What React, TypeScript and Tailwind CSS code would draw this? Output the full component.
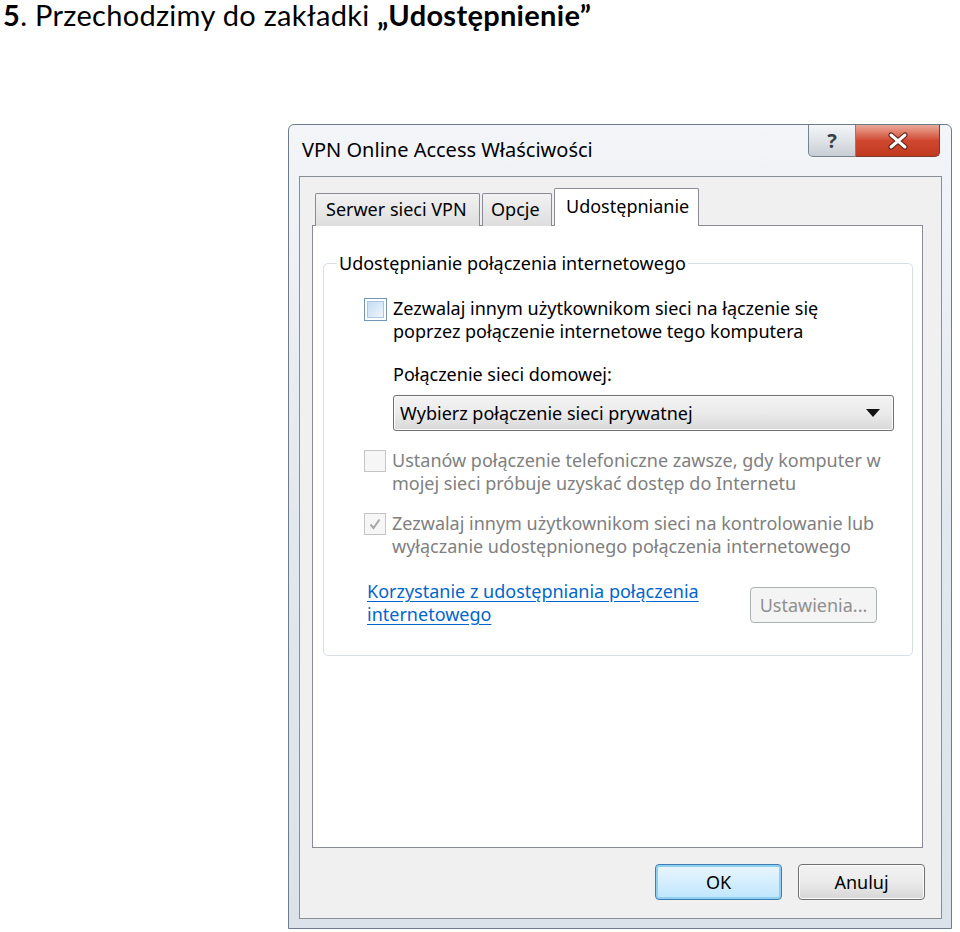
import React from "react";

const ui = { fontFamily: '"Noto Sans", "Open Sans", sans-serif' };

function Checkbox({ state }: { state: "focus" | "off" | "checked" }) {
    if (state === "focus") {
        return (
            <div className="w-[23px] h-[23px] border border-[#7196b8] bg-white p-[2px] shrink-0">
                <div className="w-full h-full border border-[#a9c7e2] bg-gradient-to-br from-[#c4dcf2] to-[#eef6fd]"></div>
            </div>
        );
    }
    return (
        <div className="w-[22px] h-[22px] border border-[#c4c4c4] bg-[#f6f6f6] shrink-0 flex items-center justify-center">
            {state === "checked" ?
                <svg width="14" height="14" viewBox="0 0 14 14">
                    <path d="M2.5 7.5 L5.5 11 L11.5 2.5" fill="none" stroke="#a8a8a8" strokeWidth="2" />
                </svg> : <></>}
        </div>
    );
}

function WinButton({ label, primary, disabled }: { label: string, primary?: boolean, disabled?: boolean }) {
    const cls = primary
        ? "border-[#3c7fb1] bg-gradient-to-b from-[#eaf6fd] to-[#bee6fd] shadow-[inset_0_0_0_2px_#8fd0f2]"
        : disabled
            ? "border-[#adb2b5] bg-[#f4f4f4] text-[#8f8f8f]"
            : "border-[#707070] bg-gradient-to-b from-[#f2f2f2] via-[#ebebeb] to-[#d6d6d6] shadow-[inset_0_0_0_1px_#fcfcfc]";
    return (
        <div className={"w-[127px] h-[36px] rounded-[4px] border flex items-center justify-center text-[18px] " + cls}>
            {label}
        </div>
    );
}

export default function App() {
    return (
        <div className="w-[960px] h-[932px] bg-white overflow-hidden">
            {/* instruction heading above the screenshot */}
            <div className="pl-[3px] h-[30px] text-[29px] leading-[30px] tracking-[0.3px] text-black whitespace-nowrap" style={{ fontFamily: 'Lato, "Liberation Sans", sans-serif' }}>
                <span className="font-bold">5</span>. Przechodzimy do zakładki <span className="font-bold">„Udostępnienie”</span>
            </div>

            {/* dialog window */}
            <div className="ml-[288px] mt-[94px] w-[664px] h-[805px] border border-[#6d7b8a] rounded-t-[6px] bg-gradient-to-b from-[#f3f5f8] via-[#e2e8ef] to-[#dbe2ea] flex flex-col" style={ui}>
                <div className="h-[51px] flex items-start">
                    <div className="pl-[13px] pt-[11px] text-[20px] text-black leading-[28px]">VPN Online Access Właściwości</div>
                    <div className="ml-auto mr-[11px] flex">
                        <div className="w-[48px] h-[32px] border border-[#76828f] border-t-0 rounded-bl-[5px] bg-gradient-to-b from-[#f4f6f8] via-[#dfe3e7] to-[#c8ced5] flex items-center justify-center text-[20px] font-bold text-[#3a3f45]">?</div>
                        <div className="w-[84px] h-[32px] border border-[#7a3a2f] border-t-0 border-l-0 rounded-br-[5px] bg-gradient-to-b from-[#e9a99a] via-[#d0472f] to-[#c1391f] flex items-center justify-center">
                            <svg width="22" height="18" viewBox="0 0 22 18">
                                <path d="M4 3 L18 15 M18 3 L4 15" stroke="#5b1e12" strokeWidth="5" strokeLinecap="round" />
                                <path d="M4 3 L18 15 M18 3 L4 15" stroke="#ffffff" strokeWidth="3" strokeLinecap="round" />
                            </svg>
                        </div>
                    </div>
                </div>

                {/* client area */}
                <div className="ml-[10px] w-[643px] h-[743px] border border-[#8a8f96] bg-[#f0f0f0] flex flex-col">
                    <div className="ml-[12px] mt-[11px] w-[611px]">
                        {/* tabs */}
                        <div className="flex items-end gap-[2px] pl-[3px] h-[38px] relative z-10 -mb-px">
                            <div className="w-[165px] h-[33px] border border-[#898c95] border-b-0 rounded-t-[2px] bg-gradient-to-b from-[#f2f2f2] to-[#dedede] text-[18px] leading-[31px] pl-[10px] text-black whitespace-nowrap">Serwer sieci VPN</div>
                            <div className="w-[70px] h-[33px] border border-[#898c95] border-b-0 rounded-t-[2px] bg-gradient-to-b from-[#f2f2f2] to-[#dedede] text-[18px] leading-[31px] pl-[8px] text-black">Opcje</div>
                            <div className="w-[145px] h-[38px] border border-[#898c95] border-b-0 rounded-t-[2px] bg-white text-[18px] leading-[34px] pl-[11px] text-black">Udostępnianie</div>
                        </div>

                        {/* tab panel */}
                        <div className="h-[623px] border border-[#898c95] bg-white pl-[10px] pt-[37px]">
                            <div className="w-[590px] h-[393px] border border-[#d5dfe5] rounded-[5px] pl-[40px] pr-[16px] relative">
                                <div className="absolute left-[13px] -top-[15px] bg-white px-[2px] text-[18px] leading-[28px] text-black whitespace-nowrap">Udostępnianie połączenia internetowego</div>

                                <div className="flex gap-[6px] mt-[34px]">
                                    <Checkbox state="focus" />
                                    <div className="text-[18px] leading-[23px] text-black -mt-[1px] whitespace-nowrap">
                                        Zezwalaj innym użytkownikom sieci na łączenie się<br />poprzez połączenie internetowe tego komputera
                                    </div>
                                </div>

                                <div className="ml-[29px] mt-[20px] text-[18px] leading-[23px] text-black">Połączenie sieci domowej:</div>

                                <div className="ml-[29px] mt-[9px] w-[501px] h-[36px] rounded-[3px] border border-[#707070] bg-gradient-to-b from-[#f3f3f3] via-[#ebebeb] to-[#d9d9d9] shadow-[inset_0_0_0_1px_#fbfbfb] flex items-center pl-[6px] pr-[13px]">
                                    <span className="text-[18px] text-black">Wybierz połączenie sieci prywatnej</span>
                                    <svg className="ml-auto" width="14" height="8" viewBox="0 0 14 8">
                                        <path d="M0 0 L14 0 L7 8 Z" fill="#111" />
                                    </svg>
                                </div>

                                <div className="flex gap-[6px] mt-[19px]">
                                    <Checkbox state="off" />
                                    <div className="text-[18px] leading-[23px] text-[#808080] -mt-[1px] whitespace-nowrap">
                                        Ustanów połączenie telefoniczne zawsze, gdy komputer w<br />mojej sieci próbuje uzyskać dostęp do Internetu
                                    </div>
                                </div>

                                <div className="flex gap-[6px] mt-[18px]">
                                    <Checkbox state="checked" />
                                    <div className="text-[18px] leading-[23px] text-[#808080] -mt-[1px] whitespace-nowrap">
                                        Zezwalaj innym użytkownikom sieci na kontrolowanie lub<br />wyłączanie udostępnionego połączenia internetowego
                                    </div>
                                </div>

                                <div className="flex items-start mt-[29px] ml-[3px]">
                                    <div className="text-[18px] leading-[23px] text-[#0066cc] underline underline-offset-[3px] -mt-[7px]">
                                        Korzystanie z udostępniania połączenia<br />internetowego
                                    </div>
                                    <div className="ml-auto mr-[19px]">
                                        <WinButton label="Ustawienia..." disabled />
                                    </div>
                                </div>
                            </div>
                        </div>
                    </div>

                    <div className="mt-[16px] flex justify-end gap-[16px] pr-[16px]">
                        <WinButton label="OK" primary />
                        <WinButton label="Anuluj" />
                    </div>
                </div>
            </div>
        </div>
    );
}
